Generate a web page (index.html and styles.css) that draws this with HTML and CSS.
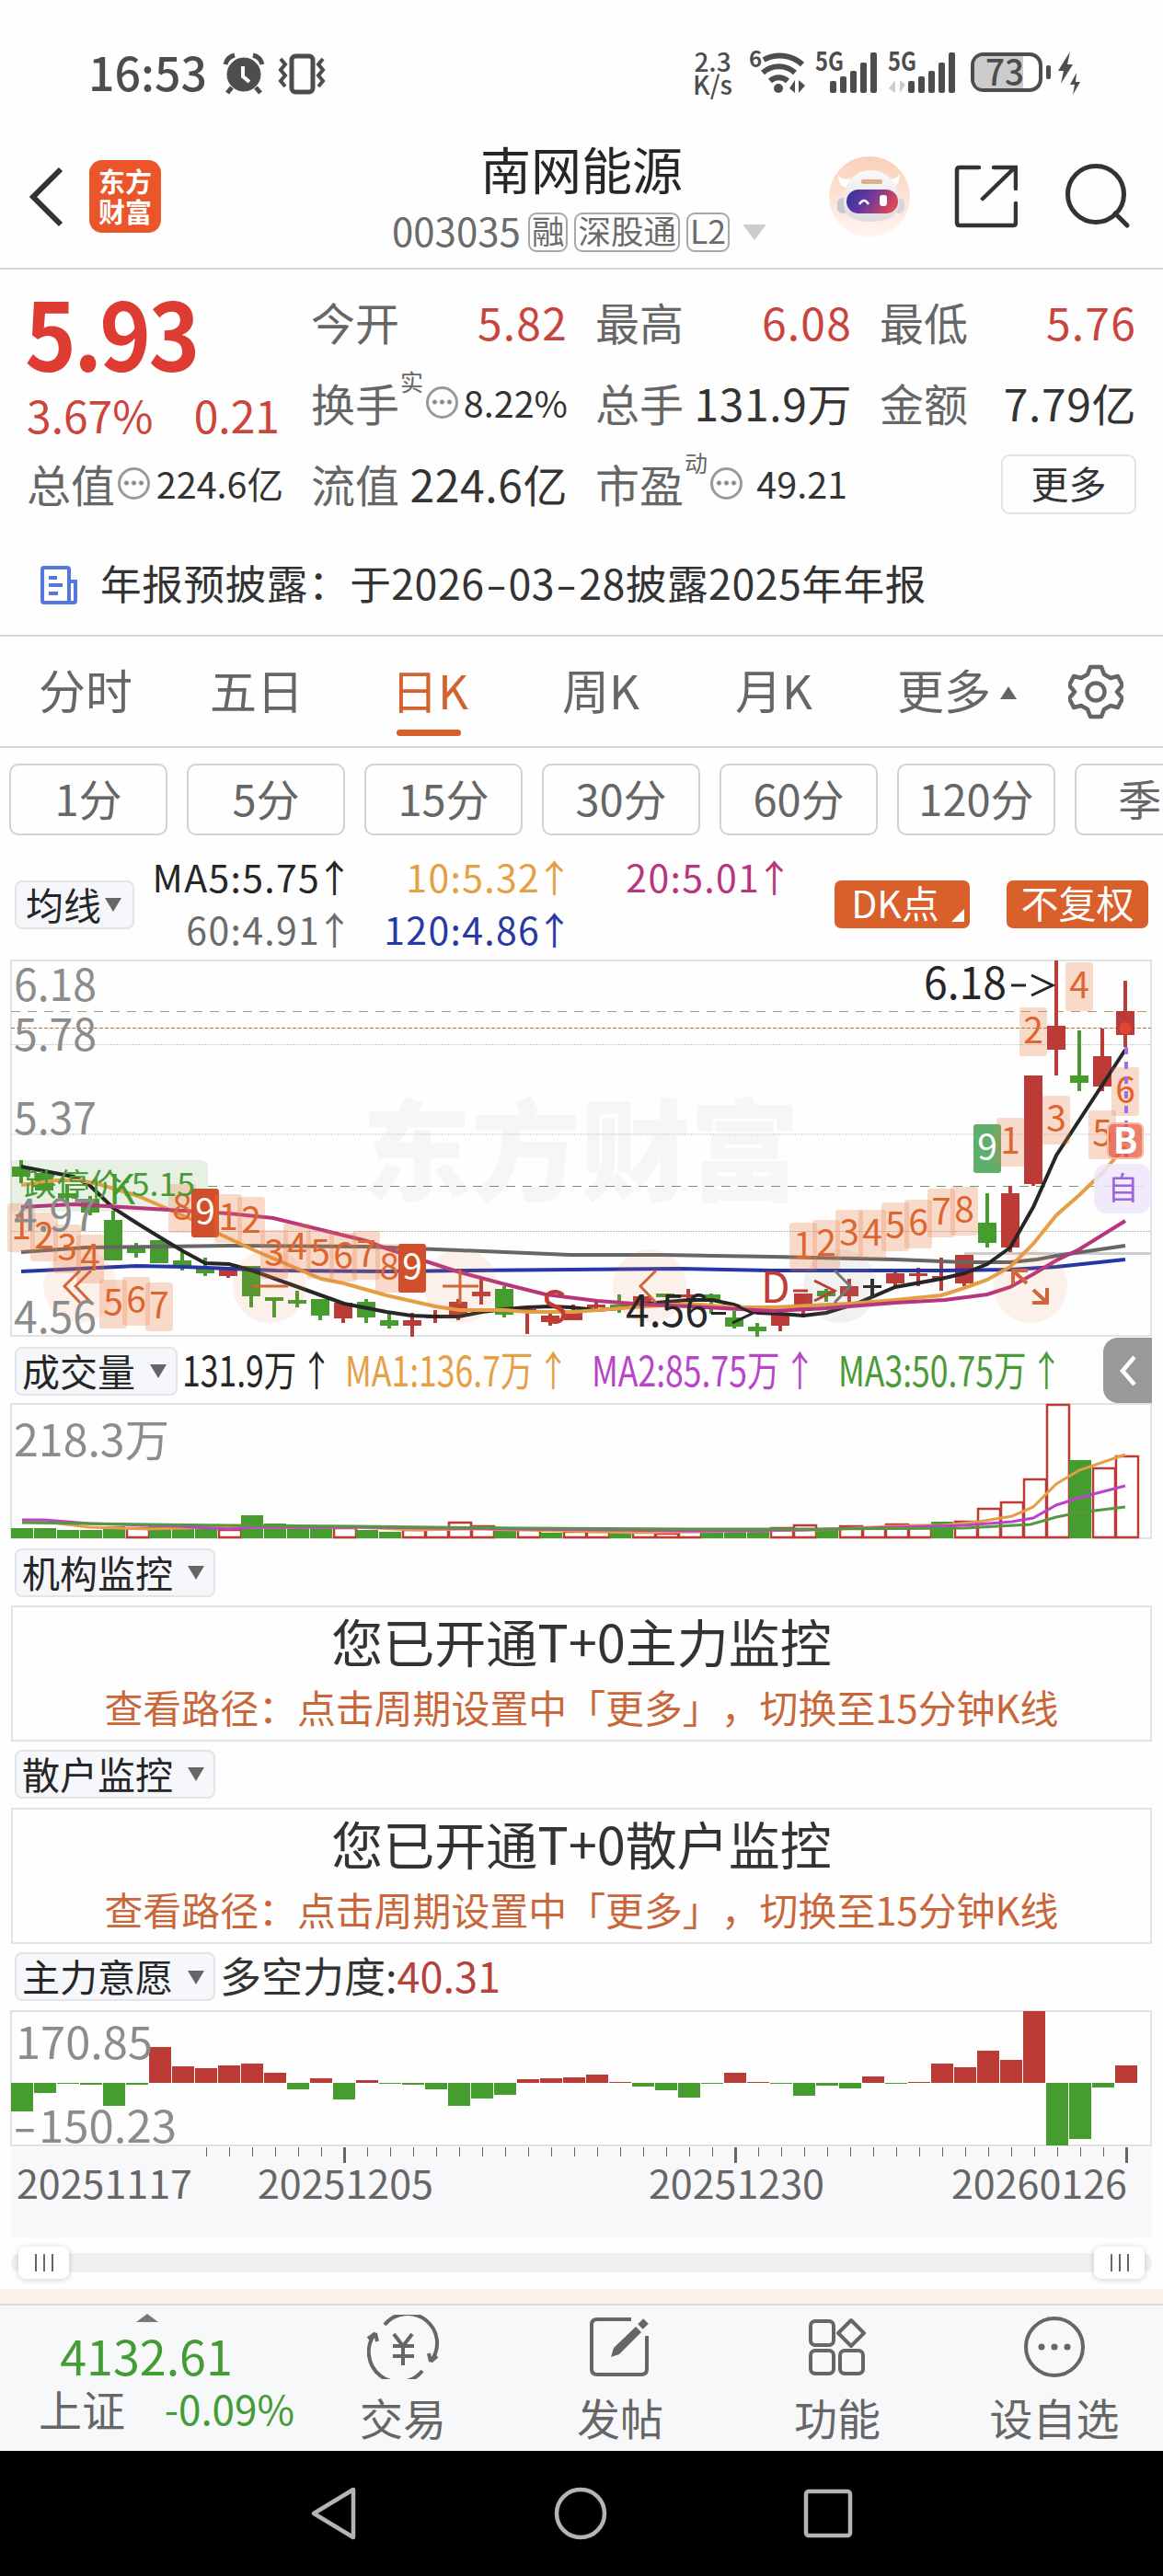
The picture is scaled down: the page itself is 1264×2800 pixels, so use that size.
FILE: index.html
```html
<!DOCTYPE html>
<html lang="zh-CN">
<head>
    <meta charset="UTF-8">
    <meta name="viewport" content="width=device-width, initial-scale=1.0">
    <title>南网能源 003035</title>
    <link rel="stylesheet" href="styles.css">
</head>
<body>
    <div class="status">
        <span class="clock">16:53</span>
        <svg class="status-left" width="120" height="50" viewBox="240 55 120 50">
            <g fill="#4d4d4d" stroke="#4d4d4d">
                <circle cx="265" cy="81" r="18"/>
                <path d="M245 70q2-8 10-10M285 70q-2-8-10-10M252 95l-5 6M278 95l5 6" fill="none" stroke-width="5"/>
            </g>
            <path d="M264 72v11l7 6" fill="none" stroke="#fff" stroke-width="4"/>
            <rect x="317" y="61" width="23" height="39" rx="4" fill="none" stroke="#4d4d4d" stroke-width="5"/>
            <path d="M305 64l5 6-5 6 5 6-5 6 5 6M351 64l-5 6 5 6-5 6 5 6-5 6" fill="none" stroke="#4d4d4d" stroke-width="4"/>
        </svg>
        <div class="speed">2.3<br>K/s</div>
        <svg class="status-right" width="370" height="60" viewBox="810 50 370 60">
            <g fill="none" stroke="#4d4d4d" stroke-width="6">
                <path d="M830 65a36 36 0 0 1 42 5"/>
                <path d="M829 79a26 26 0 0 1 35 0" />
                <path d="M837 88a14 14 0 0 1 19 0"/>
            </g>
            <circle cx="846" cy="96" r="5" fill="#4d4d4d"/>
            <path d="M858 96l6-9v14M875 93l-7 8v-14" fill="#4d4d4d"/>
            <g fill="#4d4d4d" font-size="28" font-weight="700">
                <text x="814" y="73" font-size="24">6</text>
                <text x="886" y="77" textLength="31" lengthAdjust="spacingAndGlyphs">5G</text>
                <text x="965" y="77" textLength="31" lengthAdjust="spacingAndGlyphs">5G</text>
            </g>
            <g fill="#4d4d4d">
                <rect x="902" y="88" width="7" height="13" rx="2"/><rect x="913" y="83" width="7" height="18" rx="2"/>
                <rect x="924" y="77" width="7" height="24" rx="2"/><rect x="935" y="68" width="7" height="33" rx="2"/>
                <rect x="946" y="57" width="7" height="44" rx="2"/>
                <rect x="987" y="88" width="7" height="13" rx="2"/><rect x="998" y="83" width="7" height="18" rx="2"/>
                <rect x="1009" y="77" width="7" height="24" rx="2"/><rect x="1020" y="68" width="7" height="33" rx="2"/>
                <rect x="1031" y="57" width="7" height="44" rx="2"/>
                <rect x="1137" y="71" width="5" height="15" rx="2"/>
                <path d="M1163 56l-13 21h6l-3 14 13-21h-6zM1170 79l-7 13h5l-2 11 8-14h-5z"/>
            </g>
            <path d="M966 96l7-9v14M984 92l-6 9v-14" fill="#ccc"/>
            <rect x="1057" y="59" width="74" height="39" rx="12" fill="#fff" stroke="#4d4d4d" stroke-width="4"/>
            <path d="M1069 61h43v35h-43q-10 0-10-10V71q0-10 10-10z" fill="#ccc"/>
            <text x="1071" y="93" fill="#4d4d4d" font-size="39" font-weight="500" textLength="42" lengthAdjust="spacingAndGlyphs">73</text>
        </svg>
    </div>

    <header class="header">
        <svg class="back" width="40" height="66" viewBox="0 0 40 66"><path d="M35 3L5 33l30 30" fill="none" stroke="#333" stroke-width="6"/></svg>
        <div class="logo">东方<br>财富</div>
        <div class="title">
            <h1>南网能源</h1>
            <div class="code"><span class="num">003035</span><i>融</i><i>深股通</i><i>L2</i><b class="tri down pale"></b></div>
        </div>
        <svg class="robot" width="88" height="88" viewBox="0 0 88 88">
            <defs>
                <linearGradient id="halo" x1="0" y1="0" x2="0" y2="1"><stop offset="0" stop-color="#f9d0b8"/><stop offset="1" stop-color="#fff6f2"/></linearGradient>
                <linearGradient id="visor" x1="0" y1="0" x2="1" y2=".3"><stop offset="0" stop-color="#2f33a0"/><stop offset=".5" stop-color="#6a38a0"/><stop offset="1" stop-color="#d6485a"/></linearGradient>
                <linearGradient id="shell" x1="0" y1="0" x2="0" y2="1"><stop offset="0" stop-color="#fbfafa"/><stop offset="1" stop-color="#dddbe0"/></linearGradient>
            </defs>
            <circle cx="44" cy="44" r="44" fill="url(#halo)"/>
            <path d="M10 20q0 12 8 14l6-10q-9 3-14-4zM77 19q0 12-8 15l-6-10q9 3 14-5z" fill="#fff"/>
            <rect x="9" y="45" width="12" height="17" rx="6" fill="#c9c8d0"/><rect x="70" y="45" width="12" height="17" rx="6" fill="#d8d6dc"/>
            <path d="M45 15c18 0 31 14 31 36 0 14-13 20-32 20S16 64 16 51c0-22 12-36 29-36z" fill="url(#shell)"/>
            <rect x="19" y="36" width="56" height="26" rx="13" fill="url(#visor)"/>
            <path d="M33 52q5-8 10 0" fill="none" stroke="#fff" stroke-width="2.500"/>
            <rect x="55" y="42" width="8" height="12" rx="3" fill="#fff"/>
            <rect x="35" y="25" width="23" height="5" rx="2" fill="#dfb088"/>
        </svg>
        <svg class="share" width="70" height="70" viewBox="0 0 70 70" fill="none" stroke="#333" stroke-width="4.500" stroke-linecap="round">
            <path d="M28 4H7q-3 0-3 3v57q0 3 3 3h58q3 0 3-3V43M32 38L66 5M44 4h24v23"/>
        </svg>
        <svg class="search" width="72" height="72" viewBox="0 0 72 72" fill="none" stroke="#333" stroke-width="5" stroke-linecap="round">
            <circle cx="34" cy="34" r="30.500"/><path d="M55 55l13 13"/>
        </svg>
    </header>

    <section class="quote">
        <div class="price">
            <strong>5.93</strong>
            <div class="change"><span>3.67%</span><span>0.21</span></div>
        </div>
        <div class="cell"><label>今开</label><b class="up">5.82</b></div>
        <div class="cell"><label>最高</label><b class="up">6.08</b></div>
        <div class="cell"><label>最低</label><b class="up">5.76</b></div>
        <div class="cell"><label>换手</label><sup>实</sup><em></em><b class="sm">8.22%</b></div>
        <div class="cell"><label>总手</label><b>131.9万</b></div>
        <div class="cell"><label>金额</label><b>7.79亿</b></div>
        <div class="cell"><label>总值</label><em></em><b class="sm">224.6亿</b></div>
        <div class="cell"><label>流值</label><b>224.6亿</b></div>
        <div class="cell"><label>市盈</label><sup>动</sup><em></em><b class="sm pe">49.21</b></div>
        <div class="cell"><button class="more">更多</button></div>
    </section>

    <div class="notice">
        <svg width="42" height="44" viewBox="0 0 42 44" fill="none" stroke="#5577dc" stroke-width="4">
            <path d="M32 40V5q0-2-2-2H5Q3 3 3 5v34q0 2 2 2h32q2 0 2-2V18h-7M10 14h9M10 22h15M10 31h10"/>
        </svg>
        <span>年报预披露：于2026<i>-</i>03<i>-</i>28披露2025年年报</span>
    </div>

    <nav class="tabs">
        <span>分时</span><span>五日</span><span class="active">日K</span><span>周K</span><span>月K</span>
        <span>更多<b class="tri up-tri"></b></span>
        <svg width="60" height="60" viewBox="0 0 60 60" fill="none" stroke="#666" stroke-width="4.500" stroke-linejoin="round">
            <path d="M24 3h12l3 8 7 4 8-2 5 10-6 7 6 7-5 10-8-2-7 4-3 8H24l-3-8-7-4-8 2-5-10 6-7-6-7 5-10 8 2 7-4z"/>
            <circle cx="30" cy="30" r="9.500"/>
        </svg>
    </nav>

    <div class="chips">
        <span>1分</span><span>5分</span><span>15分</span><span>30分</span><span>60分</span><span>120分</span><span>季K</span>
    </div>

    <div class="ma-row">
        <button class="pick ma-pick">均线<b class="tri down"></b></button>
        <div class="ma">
            <span class="c-black">MA5:5.75<u>↑</u></span><span class="c-orange">10:5.32<u>↑</u></span><span class="c-purple">20:5.01<u>↑</u></span>
            <span class="c-grey">60:4.91<u>↑</u></span><span class="c-blue">120:4.86<u>↑</u></span>
        </div>
        <button class="solid dk">DK点</button>
        <button class="solid">不复权</button>
    </div>

    <svg id="kline" class="chart" width="1264" height="413" viewBox="0 12 1264 413"></svg>

    <div class="row vol-row">
        <button class="pick">成交量<b class="tri down"></b></button>
        <span class="narrow c-black w1">131.9万<u>↑</u></span>
        <span class="narrow c-orange">MA1:136.7万<u>↑</u></span>
        <span class="narrow c-pink">MA2:85.75万<u>↑</u></span>
        <span class="narrow c-green">MA3:50.75万<u>↑</u></span>
        <div class="collapse"><svg width="20" height="34" viewBox="0 0 20 34"><path d="M17 2L4 17l13 15" fill="none" stroke="#fff" stroke-width="4.500"/></svg></div>
    </div>
    <svg id="volume" class="chart" width="1264" height="149" viewBox="0 75 1264 149"></svg>

    <div class="row"><button class="pick">机构监控<b class="tri down"></b></button></div>
    <div class="panel">
        <h2>您已开通T+0主力监控</h2>
        <p>查看路径：点击周期设置中「更多」，切换至15分钟K线</p>
    </div>

    <div class="row tall"><button class="pick">散户监控<b class="tri down"></b></button></div>
    <div class="panel">
        <h2>您已开通T+0散户监控</h2>
        <p>查看路径：点击周期设置中「更多」，切换至15分钟K线</p>
    </div>

    <div class="row tall last">
        <button class="pick">主力意愿<b class="tri down"></b></button>
        <span class="force">多空力度:<b>40.31</b></span>
    </div>
    <svg id="force" class="chart" width="1264" height="149" viewBox="0 55 1264 149"></svg>
    <svg id="axis" class="chart" width="1264" height="98" viewBox="0 204 1264 98"></svg>

    <div class="slider">
        <div class="track"><span></span><span></span></div>
    </div>
    <div class="strip"></div>

    <footer class="bottom">
        <div class="index">
            <b class="tri up-tri"></b>
            <strong>4132.61</strong>
            <div><span>上证</span><em>-0.09%</em></div>
        </div>
        <div class="item">
            <svg width="78" height="70" viewBox="0 0 78 70" fill="none" stroke="#666" stroke-width="4">
                <path d="M19 11A32 32 0 0 1 69 51l7-6M67 42l2 9M60 61A32 32 0 0 1 9 20l-8 6M9 20l2 9"/>
                <path d="M29 21l10 13 10-13M39 34v21M28 34h23M28 45h23"/>
            </svg>
            交易
        </div>
        <div class="item">
            <svg width="70" height="70" viewBox="0 0 70 70" fill="none" stroke="#666" stroke-width="4">
                <path d="M47 5H10q-6 0-6 6v48q0 6 6 6h48q6 0 6-6V23"/>
                <path d="M25 46l3-10 24-23 6 6-24 24z" fill="#666" stroke="none"/><path d="M57 13l6-6" stroke-width="8"/>
            </svg>
            发帖
        </div>
        <div class="item">
            <svg width="66" height="70" viewBox="0 0 66 70" fill="none" stroke="#666" stroke-width="4">
                <rect x="4" y="7" width="25" height="26" rx="5"/><rect x="4" y="39" width="25" height="25" rx="5"/>
                <rect x="36" y="39" width="25" height="25" rx="5"/><path d="M48 6l14 14-14 14-14-14z" stroke-linejoin="round"/>
            </svg>
            功能
        </div>
        <div class="item">
            <svg width="70" height="70" viewBox="0 0 70 70">
                <circle cx="35" cy="35" r="31" fill="none" stroke="#666" stroke-width="4"/>
                <g fill="#666"><circle cx="21" cy="35" r="3.500"/><circle cx="35" cy="35" r="3.500"/><circle cx="49" cy="35" r="3.500"/></g>
            </svg>
            设自选
        </div>
    </footer>

    <div class="sysnav">
        <svg width="54" height="60" viewBox="0 0 54 60"><path d="M48 4v52L5 30z" fill="none" stroke="#b4b4b4" stroke-width="4.500" stroke-linejoin="round"/></svg>
        <svg width="60" height="60" viewBox="0 0 60 60"><circle cx="30" cy="30" r="26" fill="none" stroke="#b4b4b4" stroke-width="4.500"/></svg>
        <svg width="56" height="60" viewBox="0 0 56 60"><rect x="4" y="6" width="48" height="48" rx="3" fill="none" stroke="#b4b4b4" stroke-width="4.500"/></svg>
    </div>

    <script src="chart.js"></script>
</body>
</html>
```
FILE: styles.css
```css
body {
    margin: 0;
    width: 1264px;
    background-color: #fefefe;
    font-family: "Noto Sans CJK SC", "Liberation Sans", sans-serif;
    line-height: 1;
    color: #333;
    overflow-x: hidden;
}

h1, h2, p {
    margin: 0;
    font-weight: normal;
}

b, i, em, u {
    font-weight: normal;
    font-style: normal;
    text-decoration: none;
}

button {
    font: inherit;
    margin: 0;
    padding: 0;
    box-sizing: border-box;
}

svg {
    display: block;
    flex: none;
}

svg text {
    font-family: "Noto Sans CJK SC", "Liberation Sans", sans-serif;
}

u {
    display: inline-block;
    width: 40px;
    margin: 0 -8px 0 -5px;
    text-align: center;
    letter-spacing: 0;
}

.tri {
    display: inline-block;
    border-left: 9px solid transparent;
    border-right: 9px solid transparent;
}

.tri.down {
    border-top: 15px solid #666;
}

.tri.up-tri {
    border-bottom: 14px solid #666;
}

.tri.pale {
    border-left-width: 13px;
    border-right-width: 13px;
    border-top: 17px solid #ccc;
    margin-left: 7px;
}

.c-black { color: #262626; }
.c-orange { color: #e5a045; }
.c-purple { color: #b8357f; }
.c-pink { color: #b944c8; }
.c-grey { color: #6b6b6b; }
.c-blue { color: #2939a2; }
.c-green { color: #4b9a37; }

/* status bar */
.status {
    display: flex;
    align-items: center;
    height: 130px;
    padding: 30px 84px 0 96px;
    box-sizing: border-box;
    color: #4d4d4d;
}

.clock {
    font-size: 50px;
    font-weight: 500;
    margin-top: -7px;
}

.status-left {
    margin-left: 15px;
}

.speed {
    margin-left: auto;
    margin-top: -3px;
    font-size: 28px;
    font-weight: 500;
    line-height: 25px;
    text-align: center;
}

.status-right {
    margin-left: 14px;
}

/* header */
.header {
    display: flex;
    align-items: flex-start;
    height: 163px;
    border-bottom: 2px solid #d8d8d8;
    box-sizing: border-box;
    padding: 18px 0 0 31px;
}

.back {
    margin-top: 33px;
}

.logo {
    flex: none;
    width: 78px;
    height: 79px;
    margin: 26px 0 0 26px;
    padding-top: 6px;
    box-sizing: border-box;
    border-radius: 14px;
    background-color: #ea5529;
    color: #fff;
    font-size: 29px;
    font-weight: bold;
    line-height: 33px;
    text-align: center;
}

.title {
    flex: none;
    margin-left: 251px;
    width: 411px;
    margin-top: 7px;
}

.title h1 {
    font-size: 55px;
    margin-left: 96px;
    color: #262626;
}

.code {
    display: flex;
    align-items: center;
    margin-top: 21px;
    color: #6b6b6b;
    white-space: nowrap;
}

.code .num {
    font-size: 42px;
    margin: -5px 8px 0 0;
}

.code i {
    flex: none;
    height: 43px;
    box-sizing: border-box;
    padding: 0 2px;
    margin-right: 7px;
    border: 2px solid #a8a8a8;
    border-radius: 9px;
    font-size: 35.500px;
    line-height: 34px;
}

.robot {
    margin: 22px 0 0 64px;
}

.share {
    margin: 30px 0 0 47px;
}

.search {
    margin: 29px 0 0 51px;
}

/* quote grid */
.quote {
    display: grid;
    grid-template-columns: repeat(4, 279px);
    grid-auto-rows: 88px;
    column-gap: 30px;
    padding: 12px 0 0 29px;
    height: 288px;
    box-sizing: border-box;
}

.price {
    grid-row: span 2;
    color: #de3c33;
}

.price strong {
    display: block;
    font-size: 102px;
    letter-spacing: -3px;
    margin-top: 2px;
    margin-left: -2px;
    line-height: 106px;
    transform: scaleX(.93);
    transform-origin: left;
}

.change {
    display: flex;
    justify-content: space-between;
    margin-top: 13px;
    padding-right: 4px;
    font-size: 48px;
    color: #cc443b;
}

.cell {
    display: flex;
    align-items: center;
    font-size: 48px;
    color: #333;
    white-space: nowrap;
}

.cell label {
    color: #666;
}

.cell sup {
    font-size: 25px;
    line-height: 1;
    align-self: flex-start;
    margin: 9px 0 0 1px;
    color: #666;
}

.cell em {
    width: 35px;
    height: 35px;
    box-sizing: border-box;
    margin-left: 3px;
    border: 3px solid #999;
    border-radius: 50%;
    background: radial-gradient(circle at center, #888 2px, transparent 3px) center / 8px 8px repeat-x content-box;
    padding: 0 3px;
}

.cell b {
    margin-left: auto;
    letter-spacing: .6px;
}

.cell .up {
    color: #c8443c;
    letter-spacing: 1.200px;
}

.cell .sm {
    font-size: 39.500px;
    letter-spacing: 0;
}

.cell .pe {
    margin-right: 5px;
}

.more {
    margin-left: auto;
    width: 147px;
    height: 65px;
    margin-top: 3px;
    border: 2px solid #e3e5e5;
    border-radius: 9px;
    background: none;
    color: #333;
    font-size: 41px;
    line-height: 52px;
    padding-bottom: 5px;
}

.notice {
    display: flex;
    align-items: center;
    height: 111px;
    padding: 0 0 0 43px;
    border-bottom: 2px solid #d8d8d8;
    box-sizing: border-box;
    font-size: 44.700px;
    letter-spacing: .5px;
}

.notice span {
    margin: -5px 0 0 24px;
}

.notice i {
    display: inline-block;
    width: 26px;
    text-align: center;
    transform: scaleX(1.500);
}

/* period tabs */
.tabs {
    display: flex;
    align-items: center;
    height: 121px;
    padding-left: 42px;
    border-bottom: 2px solid #d8d8d8;
    box-sizing: border-box;
    font-size: 51px;
    color: #666;
}

.tabs span {
    width: 186px;
    margin-top: -5px;
}

.tabs span:nth-child(2) { width: 197px; }
.tabs span:nth-child(3) { width: 186px; }
.tabs span:nth-child(4) { width: 188px; }
.tabs span:nth-child(5) { width: 176px; }

.tabs .active {
    color: #d4622f;
    position: relative;
}

.tabs .active::after {
    content: "";
    position: absolute;
    left: 6px;
    bottom: -25px;
    width: 70px;
    height: 7px;
    border-radius: 4px;
    background-color: #d85f28;
}

.tabs .tri {
    margin: 0 0 11px 10px;
}

.chips {
    display: flex;
    gap: 21px;
    padding: 17px 0 16px 10px;
    overflow: hidden;
}

.chips span {
    flex: none;
    width: 172px;
    height: 78px;
    box-sizing: border-box;
    border: 2px solid #d2d2d2;
    border-radius: 10px;
    font-size: 47px;
    line-height: 70px;
    text-align: center;
    color: #666;
}

/* moving averages */
.ma-row {
    display: flex;
    align-items: center;
    height: 118px;
    padding-left: 16px;
}

.pick {
    display: flex;
    align-items: center;
    height: 53px;
    padding: 0 10px 2px 6px;
    border: 2px solid #e2e4e7;
    border-radius: 8px;
    background-color: #f6f7fa;
    font-size: 41px;
    line-height: 47px;
    color: #262626;
}

.pick .tri {
    margin: 3px 0 0 16px;
}

.ma-pick {
    flex: none;
    width: 130px;
    padding-left: 10px;
    padding-right: 0;
}

.ma-pick .tri {
    margin-left: 4px;
}

.ma {
    display: grid;
    grid-template-columns: 229px 239px 239px;
    width: 707px;
    row-gap: 16px;
    font-size: 41px;
    letter-spacing: 1.300px;
    text-align: right;
    white-space: nowrap;
    margin-top: -5px;
}

.solid {
    height: 52px;
    width: 154px;
    border: none;
    border-radius: 7px;
    background-color: #d9602a;
    color: #fff;
    font-size: 41px;
    line-height: 46px;
    padding-bottom: 6px;
}

.dk {
    position: relative;
    width: 147px;
    margin: 0 40px 0 54px;
    padding-right: 15px;
}

.dk::after {
    content: "";
    position: absolute;
    right: 6px;
    bottom: 7px;
    border-left: 14px solid transparent;
    border-bottom: 14px solid #fff;
}

/* indicator rows */
.row {
    display: flex;
    align-items: center;
    height: 70px;
    padding-left: 16px;
}

.row.tall {
    height: 72px;
}

.row.last {
    height: 73px;
}

.narrow {
    font-size: 45px;
    width: 268px;
    margin-top: -6px;
    white-space: nowrap;
    transform: scaleX(.79);
    transform-origin: left;
}

.narrow u {
    width: 45px;
    margin-left: 5px;
}

.vol-row {
    position: relative;
}

.vol-row .w1 {
    width: 177px;
    margin-left: 5px;
}

.vol-row .collapse {
    position: absolute;
    left: 1199px;
    top: -1px;
    display: flex;
    align-items: center;
    justify-content: center;
    width: 53px;
    height: 71px;
    border-radius: 16px 0 0 16px;
    background-color: #999;
}

.panel {
    box-sizing: border-box;
    height: 148px;
    margin: 1px 12px -1px;
    border: 2px solid #e4e4e4;
    text-align: center;
}

.panel h2 {
    font-size: 56px;
    padding-top: 8px;
}

.panel p {
    font-size: 41.900px;
    margin-top: 23px;
    color: #c9673a;
    text-spacing-trim: space-all;
    font-feature-settings: "chws" 0, "halt" 0;
}

.force {
    margin: -4px 0 0 5px;
    font-size: 45px;
}

.force b {
    color: #b5433c;
}

.slider {
    height: 56px;
    padding: 17px 12px 0;
    box-sizing: border-box;
}

.track {
    display: flex;
    justify-content: space-between;
    align-items: center;
    height: 21px;
    padding: 0 8px;
    border-radius: 10px;
    background-color: #f0f0f2;
}

.track span {
    width: 55px;
    height: 35px;
    border-radius: 8px;
    box-shadow: 0 1px 7px rgba(0, 0, 0, 0.18);
    background: repeating-linear-gradient(90deg, #666 0 2px, transparent 2px 9px) 18px 8px / 20px 19px no-repeat #fff;
}

.strip {
    height: 16px;
    background-color: #fdf2ee;
}

/* bottom bar */
.bottom {
    display: flex;
    height: 160px;
    box-sizing: border-box;
    border-top: 2px solid #dbd8df;
    background-color: #f6f8fa;
    color: #666;
    font-size: 47px;
}

.index {
    width: 320px;
    text-align: center;
}

.index > .tri {
    display: block;
    width: 0;
    margin: 9px auto 0;
    border-width: 0 12px 9px;
    border-bottom-color: #777;
}

.index strong {
    display: block;
    margin-top: 10px;
    font-weight: normal;
    font-size: 52px;
    color: #449c34;
    padding-right: 2px;
}

.index div {
    display: flex;
    justify-content: space-between;
    padding-left: 42px;
    margin-top: 7px;
    line-height: 49px;
}

.index em {
    font-size: 44px;
    color: #449c34;
}

.item {
    width: 236px;
    display: flex;
    flex-direction: column;
    align-items: center;
    padding-top: 10px;
    gap: 17px;
}

.sysnav {
    display: flex;
    justify-content: center;
    align-items: center;
    gap: 211px;
    height: 136px;
    background-color: #000;
}
```
FILE: chart.js
```js
const RED = '#bd3b36';
const GREEN = '#469c2e';

// type, high, low, body top, body bottom
const candles = [
    ['g', 231, 256, 238, 249], ['g', 242, 265, 245, 264], ['g', 257, 277, 267, 272], ['g', 270, 291, 273, 288],
    ['g', 286, 340, 296, 340], ['g', 321, 337, 326, 332], ['g', 318, 343, 318, 343], ['g', 330, 351, 340, 346],
    ['g', 337, 357, 348, 354], ['r', 348, 359, 348, 357], ['g', 346, 391, 346, 379], ['g', 380, 402, 380, 384],
    ['g', 373, 391, 383, 387], ['g', 382, 405, 382, 400], ['r', 386, 408, 386, 403], ['g', 382, 408, 385, 402],
    ['g', 398, 414, 405, 411], ['r', 397, 423, 405, 411], ['r', 394, 408, 400, 403], ['r', 382, 405, 385, 400],
    ['r', 360, 388, 374, 379], ['g', 368, 402, 371, 399], ['r', 393, 420, 393, 396], ['r', 397, 411, 400, 407],
    ['r', 388, 405, 395, 405], ['r', 385, 393, 388, 391], ['g', 377, 397, 388, 392], ['r', 379, 387, 379, 387],
    ['g', 376, 380, 376, 380], ['r', 371, 383, 377, 380], ['g', 376, 398, 377, 385], ['g', 395, 414, 402, 412],
    ['g', 408, 423, 412, 417], ['r', 393, 417, 398, 411], ['r', 376, 402, 376, 395], ['g', 371, 385, 373, 379],
    ['r', 360, 387, 368, 379], ['k', 360, 379, 367, 370], ['r', 352, 368, 354, 365], ['r', 348, 368, 354, 357],
    ['r', 337, 373, 357, 360], ['r', 334, 368, 334, 365], ['g', 267, 326, 299, 321], ['r', 259, 331, 267, 326],
    ['r', 139, 259, 139, 257], ['r', 14, 139, 85, 111], ['g', 90, 156, 139, 147], ['r', 88, 156, 118, 151],
    ['r', 36, 108, 69, 95]
];

const averages = [
    ['#666', '23,331 93,326 174,325 250,324 399,325 499,329 620,334 720,334 840,336 973,339 1048,342 1098,342 1127,339 1148,335 1223,324'],
    ['#2836a4', '23,352 148,346 200,347 300,351 420,352 620,350 737,349 840,351 1023,351 1098,350 1148,347 1223,339'],
    ['#262626', '23,238 80,249 97,258 123,283 148,299 174,315 199,330 223,343 249,344 274,351 324,369 374,387 420,396 447,400 473,401 499,401 524,396 549,393 573,391 599,390 620,391 649,394 673,392 713,386 749,383 774,383 797,388 823,397 848,398 873,400 898,397 933,386 973,369 1023,360 1048,354 1073,344 1098,326 1123,282 1148,226 1223,111'],
    ['#e59f43', '23,258 60,253 87,253 107,257 150,270 180,283 223,302 240,312 274,328 349,360 374,365 420,378 473,390 499,394 549,394 573,396 624,396 649,394 687,391 749,387 797,391 840,391 923,387 973,383 1023,378 1048,370 1073,361 1098,347 1123,322 1148,291 1173,269 1198,245 1223,216'],
    ['#b8347d', '23,282 80,279 133,282 199,286 249,289 297,294 350,307 399,319 420,327 463,341 500,353 549,366 593,377 649,384 703,388 749,390 840,395 898,392 973,386 1027,383 1073,377 1098,369 1123,355 1148,340 1173,328 1223,297']
];

// countdown labels: text, candle centre, top, style
const tags = [
    [1, 23, 278], [2, 48, 288], [3, 73, 301], [4, 98, 312], [5, 123, 361], [6, 148, 358], [7, 173, 364],
    [8, 198, 257], [9, 223, 262, 'hot'], [1, 248, 268], [2, 273, 271], [3, 298, 307], [4, 323, 300], [5, 348, 307],
    [6, 373, 310], [7, 398, 308], [8, 423, 322], [9, 448, 322, 'hot'],
    [1, 873, 299], [2, 898, 296], [3, 923, 285], [4, 948, 285], [5, 973, 277], [6, 998, 274], [7, 1023, 262],
    [8, 1048, 260], [9, 1073, 192, 'cool'], [1, 1098, 185], [2, 1123, 65], [3, 1148, 161], [4, 1173, 16],
    [5, 1198, 177], [6, 1223, 130]
];

const line = (x1, y1, x2, y2, color, w, dash) =>
    `<line x1="${x1}" y1="${y1}" x2="${x2}" y2="${y2}" stroke="${color}" stroke-width="${w}" ${dash ? `stroke-dasharray="${dash}"` : ''}/>`;
const text = (str, x, y, size, color, extra = '') =>
    `<text x="${x}" y="${y}" font-size="${size}" fill="${color}" ${extra}>${str}</text>`;
const poly = (points, color, w) =>
    `<polyline points="${points}" fill="none" stroke="${color}" stroke-width="${w}"/>`;
const fit = w => `textLength="${w}" lengthAdjust="spacingAndGlyphs"`;

function drawKline() {
    let s = text('东方财富', 393, 266, 119, '#f6f6f6', 'font-weight="900"');
    s += '<rect x="12" y="14" width="1239" height="408" fill="none" stroke="#e2e2e2" stroke-width="2"/>';
    s += line(12, 105.5, 1251, 105.5, '#ccc', 1, '2 1') + line(12, 203, 1251, 203, '#ccc', 1, '2 1') + line(12, 308.5, 1251, 308.5, '#bbb', 1, '2 1');
    s += line(12, 69.5, 1251, 69.5, '#b99a66', 1, '10 8') + line(12, 87.5, 1251, 87.5, '#b9713f', 1, '4 2');
    s += line(226, 259.5, 1251, 259.5, '#5ea755', 1, '10 8');
    s += line(1048, 332.5, 1251, 332.5, '#ccc', 3);
    candles.forEach(([type, high, low, top, bottom], i) => {
        const x = 23 + i * 25;
        const color = { r: RED, g: GREEN, k: '#262626' }[type];
        s += line(x, high, x, low, color, 4);
        s += `<rect x="${x - 10}" y="${top}" width="20" height="${Math.max(bottom - top, 3)}" fill="${color}"/>`;
    });
    s += '<path d="M12 231h206q8 0 8 8v48H12z" fill="#469c2e" fill-opacity=".13"/>';
    averages.forEach(([color, points]) => s += poly(points, color, 4));
    [87, 293, 501, 706, 913, 1120].forEach(x => {
        s += `<circle cx="${x}" cy="368" r="40" fill="${x === 913 ? '#888' : '#e9824d'}" fill-opacity=".11"/>`;
    });
    tags.forEach(([n, x, y, kind]) => {
        const fill = { hot: '#d14f2a', cool: '#5fae6c' }[kind];
        s += `<rect x="${x - 15}" y="${y}" width="30" height="53" rx="3" fill="${fill || '#e87a42'}" fill-opacity="${fill ? 1 : .27}"/>`;
        s += text(n, x, y + 39, 39, fill ? '#fff' : '#df652f', 'text-anchor="middle"');
    });
    // signal marks inside the circles
    s += poly('87,351 70,368 87,386', '#d0673a', 3) + poly('99,351 82,368 99,386', '#d0673a', 3);
    s += line(274, 368, 313, 368, '#d0673a', 3) + line(481, 368, 520, 368, '#d0673a', 3) + line(500, 350, 500, 387, '#d0673a', 3);
    s += poly('713,351 696,368 713,386', '#d0673a', 3) + poly('907,351 924,368 907,386', '#777', 3);
    s += '<path d="M1101 366v-15h16M1102 352l14 13M1122 386h16v-16M1137 385l-14-13" fill="none" stroke="#d0673a" stroke-width="4"/>';

    [['6.18', 58], ['5.78', 112], ['5.37', 203], ['4.97', 308], ['4.56', 419]].forEach(([p, y]) => {
        s += text(p, 15, y, 48, '#8c8c8c', fit(90));
    });
    s += text('跌停价:5.15', 26, 270, 34, '#4a9a35', fit(186));
    s += text('K', 118, 279, 45, '#469c2e');
    s += text('S', 588, 408, 48, '#c03c34') + text('D', 827, 386, 46, '#c03c34');
    s += line(862, 373, 878, 373, '#c03c34', 3) + poly('885,362 907,373 885,384', '#c03c34', 3);
    s += text('6.18', 1004, 55.5, 48, '#262626', fit(90)) + line(1099, 41, 1115, 41, '#262626', 3) + poly('1121,30 1144,41 1121,52', '#262626', 3);
    s += text('4.56', 680, 412, 48, '#262626', fit(90)) + line(773, 397.5, 789, 397.5, '#262626', 3) + poly('796,387 818,397.5 796,408', '#262626', 3);
    s += '<circle cx="1223" cy="87.5" r="6.5" fill="#de4632"/>';
    s += line(1224, 108, 1224, 230, '#a070e0', 4, '8 8');
    s += '<rect x="1204" y="191" width="38" height="38" rx="6" fill="#e8553d" fill-opacity=".75" stroke="#f6b8a9" stroke-width="2"/>';
    s += text('B', 1223, 224, 39, '#fff', 'font-weight="700" text-anchor="middle"');
    s += '<rect x="1189" y="235" width="62" height="54" rx="14" fill="#eee6fd" fill-opacity=".85"/>';
    s += text('自', 1220.5, 274, 34, '#9a66d8', 'text-anchor="middle"');
    document.getElementById('kline').innerHTML = s;
}

function drawVolume() {
    const tops = [211, 211, 213, 213, 209, 211, 209, 212, 212, 213, 197, 206, 208, 211, 211, 213, 215, 213, 212, 205, 209, 211, 212, 216, 215,
        215, 215, 215, 217, 215, 213, 213, 214, 211, 208, 212, 209, 211, 207, 208, 204, 204, 190, 183, 158, 77, 137, 146, 133];
    const kinds = 'ggggg' + 'rgggr' + 'ggggr' + 'ggrrr' + 'rgrgr' + 'rgrrr' + 'gggrr' + 'grrrr' + 'grrrr' + 'rgrr';
    let s = '<rect x="12" y="76" width="1239" height="146" fill="none" stroke="#e2e2e2" stroke-width="2"/>';
    s += text('218.3万', 15, 133, 48, '#8c8c8c', fit(169));
    tops.forEach((y, i) => {
        const x = 12 + i * 25;
        s += kinds[i] === 'r'
            ? `<rect x="${x + 1}" y="${y}" width="24" height="${221 - y}" fill="#fff" stroke="${RED}" stroke-width="2.5"/>`
            : `<rect x="${x}" y="${y}" width="24" height="${222 - y}" fill="${GREEN}"/>`;
    });
    s += poly('24,204 48,204 97,210 161,212 242,210 387,210 451,213 516,212 613,214 693,216 806,214 887,213 967,209 1024,208 1064,204 1100,198 1123,188 1148,163 1173,148 1223,131', '#e59f43', 3);
    s += poly('24,202 48,202 97,206 193,209 250,212 274,210 387,210 564,212 758,214 871,213 1048,208 1100,204 1123,200 1148,186 1173,178 1223,165', '#b944c8', 3);
    s += poly('24,205 161,207 250,208 387,209 564,211 750,212 871,212 1048,211 1120,207 1148,199 1173,194 1223,188', '#55983f', 3);
    document.getElementById('volume').innerHTML = s;
}

function drawForce() {
    const zero = 134;
    const ends = [165, 145, 135, 136, 159, 136, 95, 116, 118, 115, 113, 123, 141, 129, 152, 131, 135, 136, 141, 159, 151, 147, 130, 129, 128,
        125, 133, 138, 142, 150, 135, 123, 133, 135, 148, 137, 140, 127, 135, 133, 113, 117, 99, 109, 56, 202, 195, 139, 115];
    let s = '<rect x="12" y="56" width="1239" height="146" fill="none" stroke="#e2e2e2" stroke-width="2"/>';
    ends.forEach((y, i) => {
        s += `<rect x="${12 + i * 25}" y="${Math.min(y, zero)}" width="24" height="${Math.abs(y - zero)}" fill="${y < zero ? RED : GREEN}"/>`;
    });
    s += text('170.85', 17, 108, 48, '#8c8c8c', fit(149));
    s += text('-', 14, 199, 48, '#8c8c8c', fit(26)) + text('150.23', 42, 199, 48, '#8c8c8c', fit(150));
    document.getElementById('force').innerHTML = s;
}

function drawAxis() {
    let s = '<rect x="12" y="204" width="1240" height="98" fill="#f8f8fa"/>';
    for (let i = 8; i < 49; i++) {
        const major = i === 14 || i === 31 || i === 48;
        s += line(24.5 + i * 25, 204, 24.5 + i * 25, major ? 221 : 214, '#666', major ? 3 : 1);
    }
    [['20251117', 18], ['20251205', 280], ['20251230', 705], ['20260126', 1034]].forEach(([d, x]) => {
        s += text(d, x, 259.5, 42, '#666', fit(191));
    });
    document.getElementById('axis').innerHTML = s;
}

drawKline();
drawVolume();
drawForce();
drawAxis();
```
